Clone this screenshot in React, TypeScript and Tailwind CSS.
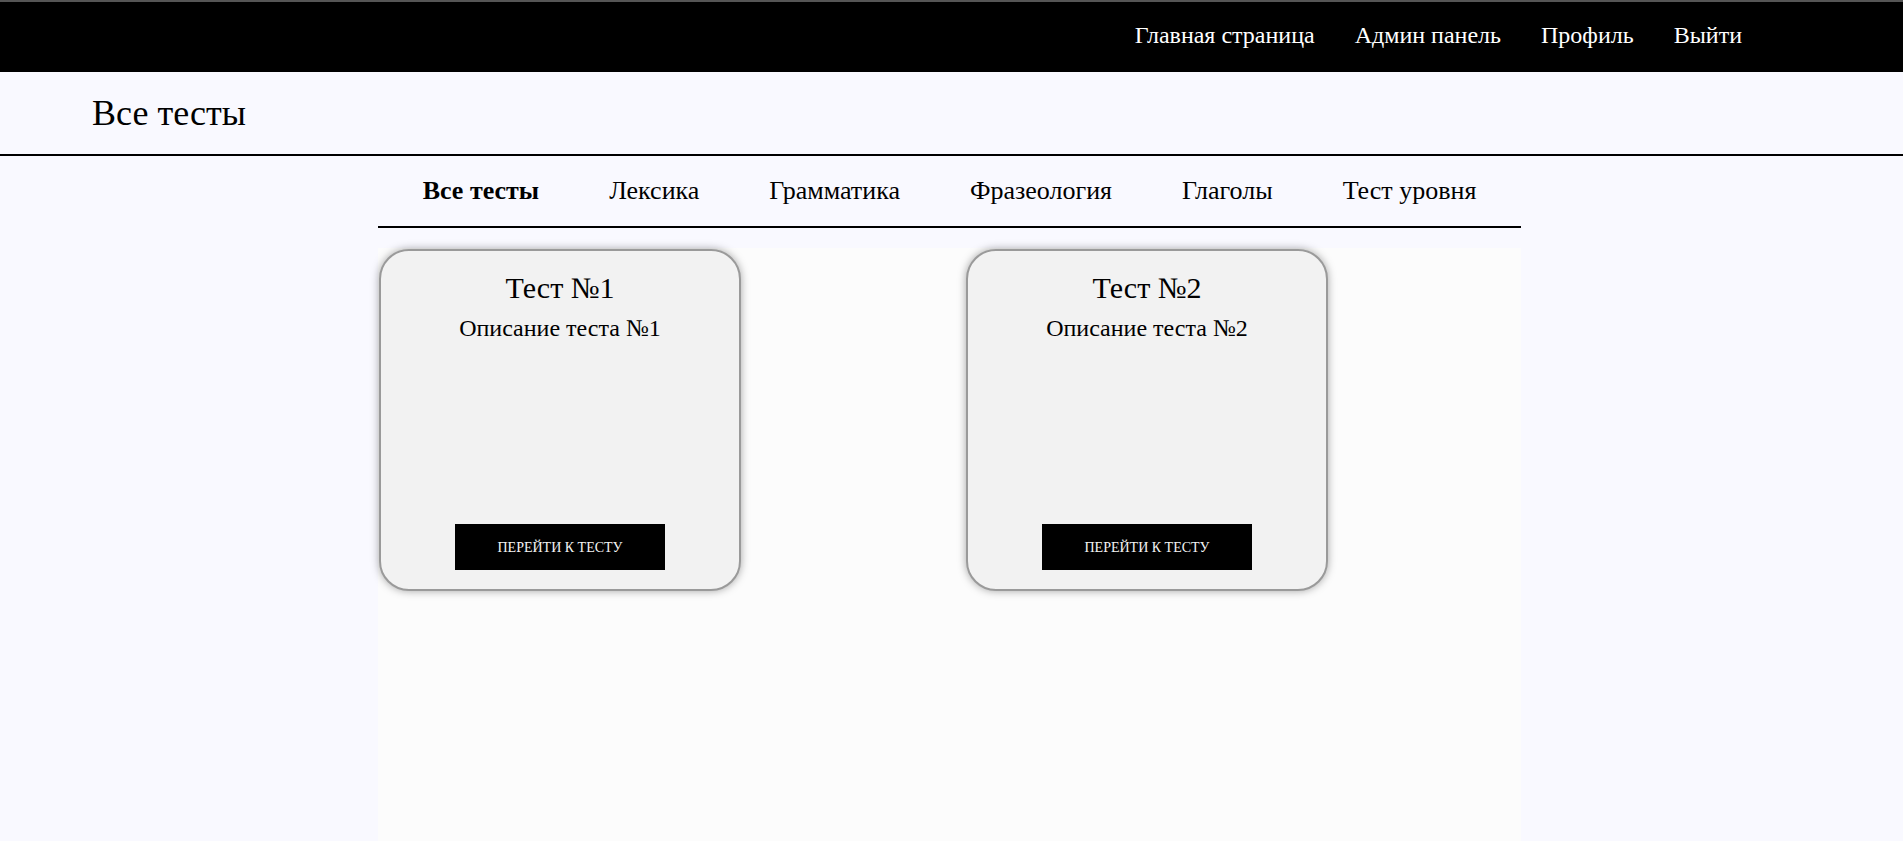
const navLinks = ["Главная страница", "Админ панель", "Профиль", "Выйти"];

const tabs = ["Все тесты", "Лексика", "Грамматика", "Фразеология", "Глаголы", "Тест уровня"];

const tests = [
  { id: 1, title: "Тест №1", description: "Описание теста №1" },
  { id: 2, title: "Тест №2", description: "Описание теста №2" },
];

function TestCard({ title, description }: { title: string; description: string }) {
  return (
    <div className="w-[362px] h-[342px] rounded-[30px] border-2 border-[#9a9a9a] bg-[#f2f2f2] shadow-[0_0_8px_rgba(0,0,0,0.35)] flex flex-col items-center pt-[20px]">
      <h2 className="text-[30px] leading-[34px]">{title}</h2>
      <p className="mt-[9px] text-[24px] leading-[28px]">{description}</p>
      <button className="mt-auto mb-[19px] w-[210px] h-[46px] bg-black text-[#f4f4f4] text-[14px] uppercase">
        Перейти к тесту
      </button>
    </div>
  );
}

export default function App() {
  return (
    <div className="min-h-screen flex flex-col bg-[#f9f9ff] text-black font-['Liberation_Serif','Times_New_Roman',serif]">
      {/* Top nav */}
      <nav className="h-[72px] border-t-2 border-[#555] bg-black flex items-center justify-end gap-[40px] pr-[161px] pb-[5px]">
        {navLinks.map((link) => (
          <a key={link} href="#" className="text-[24px] text-white">
            {link}
          </a>
        ))}
      </nav>

      {/* Page title */}
      <div className="h-[84px] border-b-2 border-black flex items-center pl-[92px]">
        <h1 className="text-[36px]">Все тесты</h1>
      </div>

      <div className="ml-[378px] w-[1143px] flex-1 flex flex-col">
        {/* Category tabs */}
        <div className="h-[72px] border-b-2 border-black flex items-center justify-center gap-[70px] pb-[2px]">
          {tabs.map((tab, i) => (
            <button key={tab} className={`text-[26px] ${i === 0 ? "font-bold" : ""}`}>
              {tab}
            </button>
          ))}
        </div>

        {/* Cards */}
        <div className="mt-[20px] flex-1 bg-[#fcfcfc] flex items-start gap-[225px] pt-[1px] pl-[1px]">
          {tests.map((t) => (
            <TestCard key={t.id} title={t.title} description={t.description} />
          ))}
        </div>
      </div>
    </div>
  );
}
